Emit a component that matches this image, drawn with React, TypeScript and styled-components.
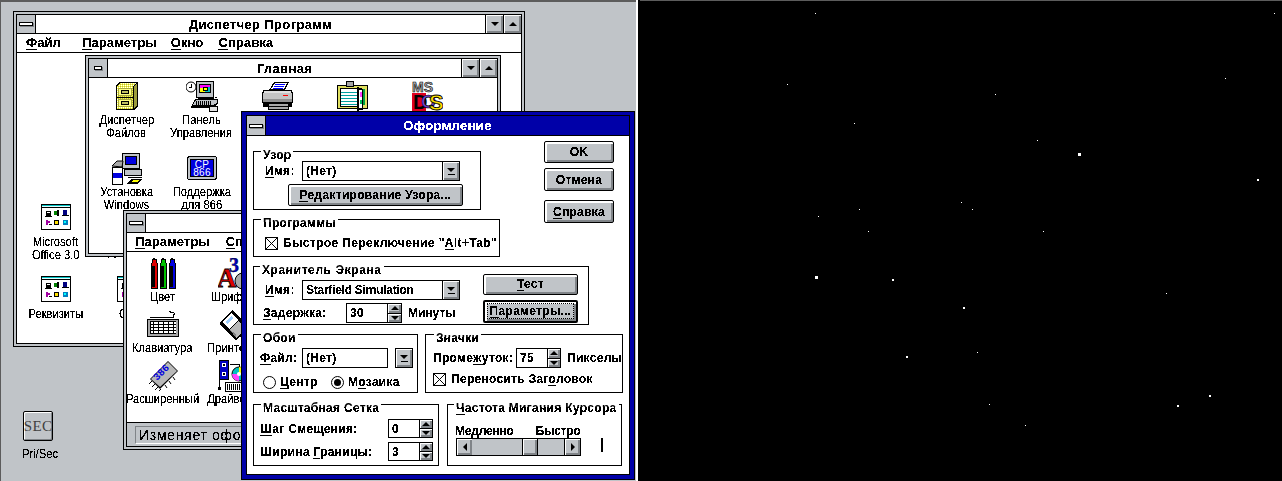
import React from 'react';
import styled, { createGlobalStyle } from 'styled-components';

const FACE = '#c0c4c8';
const SHADE = '#808488';
const NAVY = '#0000a8';

const GlobalStyle = createGlobalStyle`
  html, body { margin: 0; padding: 0; background: #000; }
  #root { width: 1282px; height: 481px; overflow: hidden; }
`;

/* ---------- screen ---------- */

const Screen = styled.div`
  display: flex;
  width: 1282px;
  height: 481px;
`;

const Desktop = styled.div`
  position: relative;
  width: 636px;
  height: 481px;
  flex: none;
  overflow: hidden;
  background: ${FACE};
  border-top: 2px solid #5c5c5c;
  border-left: 1px solid #5c5c5c;
  box-sizing: border-box;
`;

const Divider = styled.div`
  width: 2px;
  flex: none;
  background: #fff;
`;

const Sky = styled.div`
  position: relative;
  flex: 1;
  background: #000;
  border-left: 2px solid #000;
  box-shadow: inset 0 1px 0 #5c5c5c;
`;

const Star = styled.i.attrs<{ $x: number; $y: number; $s: number }>((p) => ({
  style: { left: p.$x - 640, top: p.$y, width: p.$s, height: p.$s },
}))<{ $x: number; $y: number; $s: number }>`
  position: absolute;
  background: #fff;
`;

const STARS: [number, number, number][] = [
  [815, 13, 1], [1274, 13, 1], [1225, 78, 1], [787, 84, 1], [995, 94, 1],
  [854, 123, 1], [1037, 140, 1], [1078, 153, 3], [1257, 179, 2], [961, 202, 1],
  [972, 209, 1], [859, 209, 1], [818, 216, 1], [868, 231, 1], [1043, 231, 1],
  [815, 276, 3], [892, 279, 2], [963, 307, 2], [1166, 293, 1], [906, 356, 2],
  [977, 352, 1], [989, 404, 1], [1025, 425, 1], [1177, 405, 2], [1209, 395, 2],
];

/* ---------- text ---------- */

const Bold = styled.span<{ $track?: number }>`
  font-family: 'Liberation Sans', Arial, sans-serif;
  font-weight: 700;
  font-size: 12px;
  line-height: 14px;
  letter-spacing: ${(p) => p.$track ?? 0.3}px;
  color: #000;
  white-space: nowrap;
  filter: url(#bitmap);
`;

const Thin = styled.span`
  display: block;
  font-family: 'Liberation Sans', Arial, sans-serif;
  font-weight: 400;
  font-size: 13px;
  line-height: 12.5px;
  color: #000;
  white-space: nowrap;
  text-align: center;
  transform: scaleX(0.86);
  filter: url(#bitmap);
`;

const U = styled.u`
  text-decoration: underline;
  text-decoration-thickness: 1px;
  text-underline-offset: 2px;
`;

/* ---------- windows ---------- */

const Win = styled.div<{ $x: number; $y: number; $w: number; $h: number; $z: number }>`
  position: absolute;
  left: ${(p) => p.$x - 1}px;
  top: ${(p) => p.$y - 2}px;
  width: ${(p) => p.$w}px;
  height: ${(p) => p.$h}px;
  z-index: ${(p) => p.$z};
  box-sizing: border-box;
  border: 1px solid #000;
  padding: 2px;
  background: ${FACE};
`;

const WinInner = styled.div`
  position: relative;
  display: flex;
  flex-direction: column;
  height: 100%;
  box-sizing: border-box;
  border: 1px solid #000;
  background: #fff;
`;

const TitleBar = styled.div`
  display: flex;
  height: 18px;
  flex: none;
  border-bottom: 1px solid #000;
  background: #fff;
`;

const SysBox = styled.div`
  display: flex;
  align-items: center;
  justify-content: center;
  width: 18px;
  flex: none;
  background: ${FACE};
  border-right: 1px solid #000;
`;

const SysDash = styled.div<{ $small?: boolean }>`
  width: ${(p) => (p.$small ? 6 : 12)}px;
  height: 2px;
  background: #fff;
  border: 1px solid #000;
  box-shadow: 1px 1px 0 ${SHADE};
`;

const Caption = styled(Bold)`
  flex: 1;
  text-align: center;
  font-size: 13px;
  line-height: 20px;
  letter-spacing: 0.35px;
`;

const CtlBtn = styled.div`
  display: flex;
  align-items: center;
  justify-content: center;
  width: 18px;
  flex: none;
  box-sizing: border-box;
  background: ${FACE};
  border-left: 1px solid #000;
  box-shadow: inset 1px 1px 0 #fff, inset -2px -2px 0 ${SHADE};
`;

const Tri = styled.div<{ $dir: 'up' | 'down' | 'left' | 'right'; $size?: number }>`
  width: 0;
  height: 0;
  ${({ $dir, $size = 4 }) => {
    const s = `${$size}px solid transparent`;
    const b = `${$size}px solid #000`;
    if ($dir === 'up') return `border-left:${s};border-right:${s};border-bottom:${b};`;
    if ($dir === 'down') return `border-left:${s};border-right:${s};border-top:${b};`;
    if ($dir === 'left') return `border-top:${s};border-bottom:${s};border-right:${b};`;
    return `border-top:${s};border-bottom:${s};border-left:${b};`;
  }}
`;

const MenuBar = styled.div<{ $pad: number; $gap: number }>`
  display: flex;
  align-items: center;
  gap: ${(p) => p.$gap}px;
  height: 18px;
  flex: none;
  padding-left: ${(p) => p.$pad}px;
  border-bottom: 1px solid #000;
  background: #fff;
`;

const MenuItem = styled(Bold)<{ $after?: number }>`
  font-size: 13px;
  letter-spacing: 0.1px;
  margin-right: ${(p) => p.$after ?? 0}px;
`;

const PmClient = styled.div`
  position: relative;
  flex: 1;
`;

const MainGrid = styled.div`
  display: grid;
  grid-template-columns: repeat(5, 75px);
  grid-auto-rows: 72px;
  flex: 1;
  padding-top: 3px;
  overflow: hidden;
`;

const PanelGrid = styled.div`
  display: grid;
  grid-template-columns: repeat(2, 71px);
  grid-auto-rows: 51px;
  flex: 1;
  padding-top: 6px;
  overflow: hidden;
`;

const Item = styled.div`
  display: flex;
  flex-direction: column;
  align-items: center;
  min-width: 0;

  svg {
    margin-bottom: 1px;
  }
`;

const Free = styled(Item)<{ $x: number; $y: number }>`
  position: absolute;
  left: ${(p) => p.$x}px;
  top: ${(p) => p.$y}px;
  width: 75px;

  svg {
    margin-bottom: 3px;
  }
`;

const PeekLabel = styled(Thin)<{ $x: number; $y: number }>`
  position: absolute;
  left: ${(p) => p.$x}px;
  top: ${(p) => p.$y}px;
  transform-origin: left center;
`;

const StatusBar = styled.div`
  display: flex;
  align-items: center;
  height: 23px;
  flex: none;
  padding-left: 8px;
  background: ${FACE};
  border-top: 1px solid #000;
`;

const StatusField = styled.div`
  flex: 1;
  height: 16px;
  padding-left: 3px;
  display: flex;
  align-items: center;
  border-top: 1px solid ${SHADE};
  border-left: 1px solid ${SHADE};
  border-bottom: 1px solid #fff;
`;

const StatusText = styled(Thin)`
  font-size: 14px;
  line-height: 16px;
  letter-spacing: 0.7px;
  transform: none;
  margin-top: 1px;
`;

/* ---------- dialog ---------- */

const Dialog = styled.div`
  position: absolute;
  left: 240px;
  top: 109px;
  width: 394px;
  height: 369px;
  z-index: 5;
  box-sizing: border-box;
  border: 1px solid #000;
  padding: 3px 4px 4px;
  background: ${NAVY};
`;

const DialogInner = styled.div`
  display: flex;
  flex-direction: column;
  height: 100%;
  box-sizing: border-box;
  border: 1px solid #000;
  background: #fff;
`;

const DialogTitle = styled.div`
  display: flex;
  height: 19px;
  flex: none;
  background: ${NAVY};
  border-bottom: 1px solid #000;
`;

const DialogCaption = styled(Bold)`
  flex: 1;
  text-align: center;
  color: #fff;
  font-size: 13px;
  line-height: 19px;
  letter-spacing: 0.35px;
`;

const Client = styled.div`
  display: flex;
  flex-direction: column;
  flex: 1;
  padding: 5px 6px 6px;
`;

const Row = styled.div<{ $gap?: number; $top?: number }>`
  display: flex;
  gap: ${(p) => p.$gap ?? 0}px;
  margin-top: ${(p) => p.$top ?? 0}px;
  flex: none;
`;

const LeftStack = styled.div`
  display: flex;
  flex-direction: column;
  gap: 9px;
  padding-top: 10px;
`;

const ButtonStack = styled.div`
  display: flex;
  flex-direction: column;
  margin-left: 44px;
  width: 70px;
`;

const Group = styled.div<{ $w: number; $h: number }>`
  position: relative;
  width: ${(p) => p.$w}px;
  height: ${(p) => p.$h}px;
  box-sizing: border-box;
  border: 1px solid #000;
`;

const Legend = styled(Bold)<{ $x: number }>`
  position: absolute;
  left: ${(p) => p.$x}px;
  top: -4px;
  padding: 0 2px;
  background: linear-gradient(#fff, #fff) top / 100% 6px no-repeat;
`;

const GroupBody = styled.div<{ $pad: string; $gap?: number }>`
  display: flex;
  flex-direction: column;
  gap: ${(p) => p.$gap ?? 0}px;
  padding: ${(p) => p.$pad};
`;

const Line = styled.div<{ $gap?: number; $h?: number; $in?: number }>`
  display: flex;
  align-items: center;
  gap: ${(p) => p.$gap ?? 0}px;
  height: ${(p) => (p.$h ? `${p.$h}px` : 'auto')};
  padding-left: ${(p) => p.$in ?? 0}px;
`;

const Label = styled(Bold)<{ $w?: number; $in?: number }>`
  display: block;
  box-sizing: border-box;
  width: ${(p) => (p.$w ? `${p.$w}px` : 'auto')};
  padding-left: ${(p) => p.$in ?? 0}px;
  flex: none;
`;

const Btn = styled.div<{ $w?: number; $h: number; $top?: number; $left?: number; $default?: boolean }>`
  display: flex;
  align-items: center;
  justify-content: center;
  width: ${(p) => (p.$w ? `${p.$w}px` : '100%')};
  height: ${(p) => p.$h}px;
  margin-top: ${(p) => p.$top ?? 0}px;
  margin-left: ${(p) => p.$left ?? 0}px;
  flex: none;
  box-sizing: border-box;
  background: ${FACE};
  border: ${(p) => (p.$default ? 2 : 1)}px solid #000;
  border-radius: 2px;
  box-shadow: inset 1px 1px 0 #fff, inset 2px 2px 0 #fff, inset -1px -1px 0 ${SHADE}, inset -2px -2px 0 ${SHADE};
`;

const Focus = styled.div`
  padding: 0 2px;
  outline: 1px dotted #000;
  outline-offset: 0;
  display: flex;
`;

const Field = styled.div<{ $w?: number; $h: number; $line?: boolean }>`
  display: flex;
  align-items: center;
  width: ${(p) => (p.$w ? `${p.$w}px` : 'auto')};
  flex: ${(p) => (p.$w ? 'none' : 1)};
  height: ${(p) => p.$h}px;
  box-sizing: border-box;
  padding-left: 3px;
  border: 1px solid #000;
  background: #fff;
`;

const Combo = styled.div<{ $w: number }>`
  display: flex;
  width: ${(p) => p.$w}px;
  height: 20px;
  flex: none;
`;

const Arrow = styled.div<{ $w: number; $h?: number; $left?: number }>`
  display: flex;
  flex-direction: column;
  align-items: center;
  justify-content: center;
  gap: 1px;
  width: ${(p) => p.$w}px;
  height: ${(p) => (p.$h ? `${p.$h}px` : 'auto')};
  flex: none;
  box-sizing: border-box;
  background: ${FACE};
  border: 1px solid #000;
  margin-left: ${(p) => p.$left ?? 0}px;
  box-shadow: inset 1px 1px 0 #fff, inset -2px -2px 0 ${SHADE};
`;

const DownBar = styled.div`
  width: 7px;
  height: 1px;
  background: #000;
  margin-top: 1px;
`;

const Spin = styled.div<{ $w: number; $h: number }>`
  display: flex;
  flex-direction: column;
  width: ${(p) => p.$w}px;
  height: ${(p) => p.$h}px;
  margin-left: -1px;
  flex: none;
`;

const SpinPart = styled(Arrow)<{ $last?: boolean }>`
  flex: 1;
  width: 100%;
  margin-top: ${(p) => (p.$last ? -1 : 0)}px;
`;

const CheckSvg = styled.svg`
  flex: none;
  shape-rendering: crispEdges;
`;

const RadioSvg = styled.svg`
  flex: none;
`;

const Scroll = styled.div`
  display: flex;
  width: 125px;
  height: 18px;
  flex: none;
  box-sizing: border-box;
`;

const Track = styled.div`
  flex: 1;
  display: flex;
  margin: 0 -1px;
  background: ${FACE};
  border-top: 1px solid #000;
  border-bottom: 1px solid #000;
`;

const Thumb = styled.div<{ $pos: number }>`
  width: 16px;
  margin-left: ${(p) => p.$pos}px;
  box-sizing: border-box;
  border: solid #000;
  border-width: 0 1px;
  box-shadow: inset 1px 1px 0 #fff, inset -2px -2px 0 ${SHADE};
`;

const Caret = styled.div`
  width: 2px;
  height: 14px;
  background: #000;
  margin: 0 0 4px 20px;
`;

/* ---------- icons ---------- */

const IconSvg = styled.svg`
  display: block;
  flex: none;
  shape-rendering: crispEdges;
`;

const Px: React.FC<{ d: [number, number, number, number, string][] }> = ({ d }) => (
  <>
    {d.map(([x, y, w, h, f], i) => (
      <rect key={i} x={x} y={y} width={w} height={h} fill={f} />
    ))}
  </>
);

const Icon: React.FC<{ children: React.ReactNode }> = ({ children }) => (
  <IconSvg width={32} height={32} viewBox="0 0 32 32">
    {children}
  </IconSvg>
);

const CabinetIcon = () => (
  <Icon>
    <polygon points="5,4 9,1 27,1 27,25 23,29 5,29" fill="#000" />
    <polygon points="6,5 10,2 26,2 22,5" fill="url(#yellowDither)" />
    <rect x={6} y={5} width={16} height={23} fill="url(#yellowDither)" />
    <polygon points="23,5 26,2 26,24 23,27" fill="#9c9c3c" />
    <Px d={[
      [5, 16, 18, 1, '#000'], [7, 7, 14, 8, '#a8a840'], [8, 8, 12, 6, '#ffff80'],
      [10, 9, 8, 4, '#000'], [11, 10, 6, 2, '#c0c060'],
      [7, 18, 14, 8, '#a8a840'], [8, 19, 12, 6, '#ffff80'], [10, 20, 8, 4, '#000'], [11, 21, 6, 2, '#c0c060'],
    ]} />
  </Icon>
);

const ControlIcon = () => (
  <Icon>
    <circle cx={5} cy={6} r={5} fill="#fff" stroke="#000" shapeRendering="auto" />
    <Px d={[[5, 3, 1, 4, '#000'], [3, 6, 3, 1, '#000']]} />
    <Px d={[
      [10, 0, 18, 17, '#000'], [11, 1, 16, 15, FACE], [13, 3, 12, 9, '#000'], [14, 4, 10, 3, '#ff00ff'],
      [14, 7, 5, 4, '#ffff00'], [19, 6, 5, 5, '#00c0c0'], [17, 6, 5, 4, '#000'], [18, 7, 3, 2, '#ffff00'],
      [12, 16, 16, 2, '#000'], [29, 16, 2, 1, '#000'],
    ]} />
    <polygon points="5,26 9,18 32,18 32,23 28,26" fill="#000" />
    <polygon points="7,24 10,19 31,19 31,22 27,24" fill={FACE} />
    <Px d={[
      [10, 20, 1, 4, '#000'], [12, 20, 1, 4, '#000'], [14, 20, 1, 4, '#000'], [16, 20, 1, 4, '#000'],
      [18, 20, 1, 4, '#000'], [20, 20, 1, 4, '#000'], [22, 20, 1, 4, '#000'], [24, 20, 1, 4, '#000'],
      [5, 26, 24, 1, '#000'], [23, 25, 9, 6, '#000'], [24, 26, 7, 4, '#e0e0e0'],
    ]} />
  </Icon>
);

const PrinterIcon = () => (
  <Icon>
    <polygon points="8,9 13,1 28,1 24,9" fill="#000" />
    <polygon points="10,8 14,2 26,2 23,8" fill="#fff" />
    <Px d={[[14, 3, 10, 1, '#0000ff'], [13, 5, 10, 1, '#0000ff'], [12, 7, 10, 1, '#0000ff']]} />
    <Px d={[
      [2, 9, 29, 17, '#000'], [1, 11, 31, 11, '#000'], [3, 10, 27, 6, '#e0e0e0'], [2, 12, 29, 9, '#c4c4c4'],
      [2, 18, 29, 3, '#909090'], [22, 14, 5, 1, '#ff0000'],
      [7, 22, 21, 7, '#000'], [8, 23, 19, 5, '#a8a8a8'], [8, 25, 19, 1, '#000'],
    ]} />
  </Icon>
);

const BinderIcon = () => (
  <Icon>
    <Px d={[
      [1, 4, 31, 24, '#000'], [2, 5, 29, 22, '#e0e060'], [4, 7, 22, 19, '#000'], [5, 8, 16, 17, '#fff'],
      [5, 11, 16, 1, '#00a0a0'], [5, 14, 16, 1, '#00a0a0'], [5, 17, 16, 1, '#00a0a0'], [5, 20, 16, 1, '#00a0a0'],
      [5, 23, 16, 1, '#00a0a0'], [10, 0, 8, 6, '#000'], [11, 1, 6, 4, '#a8a8a8'],
      [26, 8, 3, 16, '#00a040'], [21, 6, 2, 26, '#000'], [23, 8, 4, 21, '#000'], [23, 9, 3, 18, '#fff'],
      [24, 11, 2, 5, '#ff40ff'], [24, 19, 2, 4, '#00c060'],
    ]} />
  </Icon>
);

const LogoText = styled.text`
  font-family: 'Liberation Sans', Arial, sans-serif;
  font-weight: 700;
  shape-rendering: auto;
`;

const MsDosIcon = () => (
  <Icon>
    <LogoText x={1} y={11} fontSize={14} fill="#b0b0b0" stroke="#000" strokeWidth={0.6}>MS</LogoText>
    <Px d={[[1, 12, 14, 19, '#e00020']]} />
    <LogoText x={2} y={28} fontSize={20} fill="#000">D</LogoText>
    <LogoText x={10} y={27} fontSize={19} fill="#7040d0" stroke="#000" strokeWidth={0.7}>O</LogoText>
    <LogoText x={18} y={29} fontSize={22} fill="#ffe000" stroke="#000" strokeWidth={0.9}>S</LogoText>
  </Icon>
);

const SetupIcon = () => (
  <Icon>
    <Px d={[
      [11, 0, 18, 16, '#000'], [12, 1, 16, 14, FACE], [14, 3, 12, 9, '#000'], [15, 4, 10, 7, '#0000e0'],
      [13, 16, 18, 7, '#000'], [14, 17, 16, 5, FACE], [17, 24, 14, 1, '#000'],
      [1, 14, 11, 18, '#000'], [2, 15, 9, 5, '#fff'], [2, 20, 9, 5, '#0000e0'], [2, 25, 9, 6, '#fff'],
    ]} />
    <polygon points="1,13 6,8 12,8 11,14" fill="#a8a8a8" stroke="#000" shapeRendering="auto" />
    <polygon points="16,31 20,26 31,26 27,31" fill="#000" />
    <polygon points="20,29 22,27 28,27 26,29" fill="#ffff00" />
  </Icon>
);

const ScreenLabel = styled.text`
  font-family: 'Liberation Sans', sans-serif;
  font-size: 10px;
  font-weight: 400;
  letter-spacing: 0.3px;
`;

const Cp866Icon = () => (
  <Icon>
    <rect x={1} y={3} width={30} height={24} rx={3} fill="#000" />
    <rect x={2} y={4} width={28} height={22} rx={2} fill={FACE} />
    <rect x={4} y={6} width={24} height={18} fill="#000" />
    <rect x={5} y={7} width={22} height={16} fill="#0000e0" />
    <ScreenLabel x={16} y={15} textAnchor="middle" fill="#fff">CP</ScreenLabel>
    <ScreenLabel x={16} y={23} textAnchor="middle" fill="#fff">866</ScreenLabel>
  </Icon>
);

const GroupIcon = () => (
  <Icon>
    <Px d={[
      [1, 3, 30, 26, '#000'], [2, 4, 28, 24, '#fff'], [2, 4, 28, 1, '#00c0c0'], [2, 5, 28, 1, '#e0ffff'],
      [2, 6, 28, 1, '#000'],
      [6, 10, 5, 5, '#000'], [7, 11, 3, 1, '#fff'], [5, 15, 7, 1, '#000'],
      [14, 10, 4, 4, '#008000'], [17, 9, 2, 6, '#000'],
      [23, 9, 4, 5, '#000080'], [22, 14, 7, 1, '#000'],
      [6, 19, 2, 5, '#a000a0'], [9, 23, 3, 1, '#000'], [8, 20, 2, 2, '#a000a0'],
      [14, 19, 5, 5, '#000'], [15, 20, 3, 3, '#ffe000'],
      [23, 19, 5, 5, '#0080c0'], [24, 20, 2, 2, '#00ffff'],
    ]} />
  </Icon>
);

const crayon = (x: number, c: string): [number, number, number, number, string][] => [
  [x + 1, 0, 2, 1, '#000'], [x, 1, 5, 4, '#000'], [x + 1, 2, 3, 3, c], [x - 1, 5, 7, 26, '#000'],
  [x, 5, 5, 3, c], [x + 3, 8, 2, 21, c], [x, 29, 5, 1, c],
];

const CrayonsIcon = () => (
  <Icon>
    <Px d={[...crayon(5, '#e00000'), ...crayon(14, '#00c000'), ...crayon(23, '#0000e0')]} />
  </Icon>
);

const FontSample = styled.text`
  font-family: 'Liberation Serif', serif;
  font-weight: 700;
`;

const FontsIcon = () => (
  <Icon>
    <circle cx={25} cy={23} r={8} fill="#a8a8a8" stroke="#000" shapeRendering="auto" />
    <FontSample x={11} y={14} fontSize={20} fill="#0000c0" stroke="#000" strokeWidth={0.4}>3</FontSample>
    <FontSample x={-1} y={29} fontSize={27} fill="#e00000" stroke="#000" strokeWidth={0.8}>A</FontSample>
  </Icon>
);

const KeyboardIcon = () => {
  const keys: [number, number, number, number, string][] = [];
  for (let r = 0; r < 4; r++) {
    for (let c = 0; c < 10; c++) keys.push([4 + c * 2.5, 13 + r * 3, 2, 2, '#fff']);
  }
  return (
    <Icon>
      <Px d={[
        [3, 8, 23, 1, '#000'], [26, 5, 1, 4, '#000'], [23, 3, 4, 1, '#000'], [27, 4, 1, 2, '#000'], [22, 2, 2, 1, '#000'],
        [0, 10, 32, 18, '#000'], [1, 11, 30, 16, '#a8a8a8'], [3, 12, 26, 13, '#000'],
      ]} />
      <Px d={keys} />
    </Icon>
  );
};

const SidePrinterIcon = () => (
  <Icon>
    <polygon points="2,13 14,1 30,17 30,22 18,31 2,16" fill="#000" />
    <polygon points="4,13 13,4 20,11 11,20" fill="#fff" />
    <polygon points="7,13 13,7 15,9 9,15" fill="#a0d0ff" />
    <polygon points="12,21 20,12 30,19 18,29" fill="#b8b8b8" />
    <polygon points="12,21 18,29 18,25" fill="#808080" />
  </Icon>
);

const ChipText = styled.text`
  font-family: 'Liberation Mono', monospace;
  font-size: 10px;
  font-weight: 700;
`;

const ChipIcon = () => (
  <Icon>
    <g shapeRendering="auto">
      <polygon points="21,1 31,11 13,29 3,19" fill="#000" />
      <polygon points="21,2 30,11 13,27 4,19" fill="#b8b8b8" />
      <g stroke="#000" strokeWidth={1}>
        <path d="M5,21 l-3,3 M8,24 l-3,3 M11,27 l-3,3 M14,29 l-2,2 M18,25 l2,3 M22,21 l2,3 M26,17 l2,3" />
      </g>
      <ChipText x={0} y={0} fill="#0000e0" transform="translate(10,21) rotate(-45)">386</ChipText>
    </g>
  </Icon>
);

const DriversIcon = () => {
  const keys: [number, number, number, number, string][] = [];
  for (let i = 0; i < 10; i++) keys.push([9 + i * 2, 24, 1, 6, '#000']);
  return (
    <Icon>
      <Px d={[
        [1, 0, 10, 20, '#000'], [2, 1, 8, 18, '#0000c0'], [4, 3, 4, 4, '#fff'], [5, 4, 2, 2, '#000'],
        [4, 12, 4, 4, '#fff'], [5, 13, 2, 2, '#000'], [12, 4, 10, 1, '#000'], [21, 4, 1, 4, '#000'],
        [1, 20, 1, 8, '#000'], [0, 27, 3, 3, '#000'],
        [7, 22, 25, 10, '#000'], [8, 23, 23, 8, '#fff'],
      ]} />
      <Px d={keys} />
      <circle cx={21} cy={14} r={7} fill="#00c0c0" stroke="#000" shapeRendering="auto" />
      <path d="M21,14 L21,7 A7,7 0 0 1 28,14 Z" fill="#ffff00" shapeRendering="auto" />
      <path d="M21,14 L14,14 A7,7 0 0 0 21,21 Z" fill="#ff40ff" shapeRendering="auto" />
      <circle cx={21} cy={14} r={2} fill="#fff" shapeRendering="auto" />
    </Icon>
  );
};

const SecBadge = styled.div`
  display: flex;
  align-items: center;
  justify-content: center;
  width: 30px;
  height: 30px;
  margin: 0 3px 7px 0;
  box-sizing: border-box;
  border: 1px solid #000;
  border-radius: 2px;
  background: ${FACE};
  box-shadow: inset 1px 1px 0 #fff, inset -1px -1px 0 ${SHADE};
`;

const SecText = styled.span`
  font-family: 'Liberation Serif', serif;
  font-size: 15px;
  letter-spacing: 0.3px;
  color: #404040;
`;

/* ---------- controls built from the parts ---------- */

const CheckBox = () => (
  <CheckSvg width={13} height={13} viewBox="0 0 13 13">
    <rect x={0.5} y={0.5} width={12} height={12} fill="#fff" stroke="#000" />
    <path d="M1,1 L12,12 M12,1 L1,12" stroke="#000" shapeRendering="auto" />
  </CheckSvg>
);

const Radio: React.FC<{ on?: boolean }> = ({ on }) => (
  <RadioSvg width={13} height={13} viewBox="0 0 13 13">
    <circle cx={6.5} cy={6.5} r={6} fill="#fff" stroke="#000" />
    {on && <circle cx={6.5} cy={6.5} r={3.5} fill="#000" />}
  </RadioSvg>
);

const Drop: React.FC<{ left?: number }> = ({ left }) => (
  <Arrow $w={18} $left={left} $h={20}>
    <Tri $dir="down" />
    <DownBar />
  </Arrow>
);

const Spinner: React.FC<{ w: number; h: number }> = ({ w, h }) => (
  <Spin $w={w} $h={h}>
    <SpinPart $w={w}><Tri $dir="up" /></SpinPart>
    <SpinPart $w={w} $last><Tri $dir="down" /></SpinPart>
  </Spin>
);

const Sys: React.FC<{ small?: boolean }> = ({ small }) => (
  <SysBox><SysDash $small={small} /></SysBox>
);

const Controls = () => (
  <>
    <CtlBtn><Tri $dir="down" /></CtlBtn>
    <CtlBtn><Tri $dir="up" /></CtlBtn>
  </>
);

const Named: React.FC<{ icon: React.ReactNode; lines?: string[] }> = ({ icon, lines = [] }) => (
  <Item>
    {icon}
    {lines.map((l) => <Thin key={l}>{l}</Thin>)}
  </Item>
);

export default function App() {
  return (
    <>
      <GlobalStyle />
      <svg width={0} height={0} style={{ position: 'absolute' }}>
        <defs>
          <filter id="bitmap" x="-5%" y="-20%" width="110%" height="140%" colorInterpolationFilters="sRGB">
            <feComponentTransfer>
              <feFuncA type="discrete" tableValues="0 0 1 1 1" />
            </feComponentTransfer>
          </filter>
          <pattern id="yellowDither" width={2} height={2} patternUnits="userSpaceOnUse">
            <rect width={2} height={2} fill="#ffff40" />
            <rect width={1} height={1} fill="#fff" />
            <rect x={1} y={1} width={1} height={1} fill="#b0b040" />
          </pattern>
        </defs>
      </svg>
      <Screen>
        <Desktop>
          <Free $x={1} $y={409}>
            <SecBadge><SecText>SEC</SecText></SecBadge>
            <Thin>Pri/Sec</Thin>
          </Free>

          <Win $x={13} $y={11} $w={512} $h={336} $z={1}>
            <WinInner>
              <TitleBar>
                <Sys />
                <Caption>Диспетчер Программ</Caption>
                <Controls />
              </TitleBar>
              <MenuBar $pad={9} $gap={14}>
                <MenuItem $after={7}><U>Ф</U>айл</MenuItem>
                <MenuItem><U>П</U>араметры</MenuItem>
                <MenuItem $after={1}><U>О</U>кно</MenuItem>
                <MenuItem><U>С</U>правка</MenuItem>
              </MenuBar>
              <PmClient>
                <Free $x={1} $y={148}>
                  <GroupIcon />
                  <Thin>Microsoft</Thin>
                  <Thin>Office 3.0</Thin>
                </Free>
                <Free $x={1} $y={220}>
                  <GroupIcon />
                  <Thin>Реквизиты</Thin>
                </Free>
                <Free $x={77} $y={220}>
                  <GroupIcon />
                  <Thin>Сеть</Thin>
                </Free>
                <PeekLabel $x={83} $y={192}>Applications</PeekLabel>
              </PmClient>
            </WinInner>
          </Win>

          <Win $x={85} $y={55} $w={416} $h={202} $z={2}>
            <WinInner>
              <TitleBar>
                <Sys small />
                <Caption>Главная</Caption>
                <Controls />
              </TitleBar>
              <MainGrid>
                <Named icon={<CabinetIcon />} lines={['Диспетчер', 'Файлов']} />
                <Named icon={<ControlIcon />} lines={['Панель', 'Управления']} />
                <Named icon={<PrinterIcon />} />
                <Named icon={<BinderIcon />} />
                <Named icon={<MsDosIcon />} />
                <Named icon={<SetupIcon />} lines={['Установка', 'Windows']} />
                <Named icon={<Cp866Icon />} lines={['Поддержка', 'для 866']} />
              </MainGrid>
            </WinInner>
          </Win>

          <Win $x={123} $y={210} $w={260} $h={240} $z={3}>
            <WinInner>
              <TitleBar>
                <Sys />
                <Caption />
              </TitleBar>
              <MenuBar $pad={8} $gap={16}>
                <MenuItem><U>П</U>араметры</MenuItem>
                <MenuItem><U>С</U>правка</MenuItem>
              </MenuBar>
              <PanelGrid>
                <Named icon={<CrayonsIcon />} lines={['Цвет']} />
                <Named icon={<FontsIcon />} lines={['Шрифты']} />
                <Named icon={<KeyboardIcon />} lines={['Клавиатура']} />
                <Named icon={<SidePrinterIcon />} lines={['Принтеры']} />
                <Named icon={<ChipIcon />} lines={['Расширенный']} />
                <Named icon={<DriversIcon />} lines={['Драйверы']} />
              </PanelGrid>
              <StatusBar>
                <StatusField><StatusText>Изменяет оформление</StatusText></StatusField>
              </StatusBar>
            </WinInner>
          </Win>

          <Dialog>
            <DialogInner>
              <DialogTitle>
                <Sys />
                <DialogCaption>Оформление</DialogCaption>
              </DialogTitle>
              <Client>
                <Row>
                  <LeftStack>
                    <Group $w={228} $h={59}>
                      <Legend $x={7}>Узор</Legend>
                      <GroupBody $pad="9px 0 0 11px" $gap={3}>
                        <Line $h={20}>
                          <Label $w={37}><U>И</U>мя:</Label>
                          <Combo $w={158}>
                            <Field $h={20}><Bold>(Нет)</Bold></Field>
                            <Drop left={-1} />
                          </Combo>
                        </Line>
                        <Btn $w={175} $h={22} $left={23}>
                          <Bold><U>Р</U>едактирование Узора...</Bold>
                        </Btn>
                      </GroupBody>
                    </Group>
                    <Group $w={247} $h={38}>
                      <Legend $x={7}>Программы</Legend>
                      <GroupBody $pad="16px 0 0 11px">
                        <Line $gap={5}>
                          <CheckBox />
                          <Bold $track={0.4}>Быстрое Переключение "<U>A</U>lt+Tab"</Bold>
                        </Line>
                      </GroupBody>
                    </Group>
                  </LeftStack>
                  <ButtonStack>
                    <Btn $h={22}><Bold>OK</Bold></Btn>
                    <Btn $h={23} $top={5}><Bold>Отмена</Bold></Btn>
                    <Btn $h={23} $top={9}><Bold><U>С</U>правка</Bold></Btn>
                  </ButtonStack>
                </Row>

                <Row $top={9}>
                  <Group $w={336} $h={59}>
                    <Legend $x={6} $track={0.6}>Хранитель Экрана</Legend>
                    <Line>
                      <GroupBody $pad="13px 0 0 9px" $gap={3}>
                        <Line $h={20}>
                          <Label $w={39} $in={2}><U>И</U>мя:</Label>
                          <Combo $w={158}>
                            <Field $h={20}><Bold $track={-0.25}>Starfield Simulation</Bold></Field>
                            <Drop left={-1} />
                          </Combo>
                        </Line>
                        <Line $h={20}>
                          <Label $w={83}><U>З</U>адержка:</Label>
                          <Field $w={42} $h={20}><Bold>30</Bold></Field>
                          <Spinner w={15} h={20} />
                          <Label $in={6} $track={0}>Минуты</Label>
                        </Line>
                      </GroupBody>
                      <GroupBody $pad="6px 0 0 23px" $gap={5}>
                        <Btn $w={95} $h={21}><Bold><U>Т</U>ест</Bold></Btn>
                        <Btn $w={95} $h={23} $default>
                          <Focus><Bold><U>П</U>араметры...</Bold></Focus>
                        </Btn>
                      </GroupBody>
                    </Line>
                  </Group>
                </Row>

                <Row $top={9} $gap={7}>
                  <Group $w={165} $h={59}>
                    <Legend $x={7}>Обои</Legend>
                    <GroupBody $pad="13px 0 0 6px" $gap={7}>
                      <Line $h={20}>
                        <Label $w={42}><U>Ф</U>айл:</Label>
                        <Field $w={86} $h={20}><Bold>(Нет)</Bold></Field>
                        <Drop left={7} />
                      </Line>
                      <Line $gap={4} $in={3}>
                        <Radio />
                        <Label $w={47}><U>Ц</U>ентр</Label>
                        <Radio on />
                        <Bold>М<U>о</U>заика</Bold>
                      </Line>
                    </GroupBody>
                  </Group>
                  <Group $w={198} $h={59}>
                    <Legend $x={8}>Значки</Legend>
                    <GroupBody $pad="13px 0 0 7px" $gap={4}>
                      <Line $h={20}>
                        <Label $w={83}>Проме<U>ж</U>уток:</Label>
                        <Field $w={32} $h={20}><Bold>75</Bold></Field>
                        <Spinner w={14} h={20} />
                        <Label $in={6}>Пикселы</Label>
                      </Line>
                      <Line $gap={5}>
                        <CheckBox />
                        <Bold>Переносить Заг<U>о</U>ловок</Bold>
                      </Line>
                    </GroupBody>
                  </Group>
                </Row>

                <Row $top={11} $gap={8}>
                  <Group $w={186} $h={62}>
                    <Legend $x={7}>Масштабная Сетка</Legend>
                    <GroupBody $pad="14px 0 0 6px" $gap={4}>
                      <Line $h={19}>
                        <Label $w={128}><U>Ш</U>аг Смещения:</Label>
                        <Field $w={32} $h={19}><Bold>0</Bold></Field>
                        <Spinner w={14} h={19} />
                      </Line>
                      <Line $h={19}>
                        <Label $w={128}>Ширина <U>Г</U>раницы:</Label>
                        <Field $w={32} $h={19}><Bold>3</Bold></Field>
                        <Spinner w={14} h={19} />
                      </Line>
                    </GroupBody>
                  </Group>
                  <Group $w={175} $h={62}>
                    <Legend $x={6}><U>Ч</U>астота Мигания Курсора</Legend>
                    <GroupBody $pad="19px 0 0 7px">
                      <Line $gap={22}>
                        <Bold $track={-0.2}>Медленно</Bold>
                        <Bold $track={-0.2}>Быстро</Bold>
                      </Line>
                      <Line $in={1}>
                        <Scroll>
                          <Arrow $w={17}><Tri $dir="left" /></Arrow>
                          <Track><Thumb $pos={50} /></Track>
                          <Arrow $w={17}><Tri $dir="right" /></Arrow>
                        </Scroll>
                        <Caret />
                      </Line>
                    </GroupBody>
                  </Group>
                </Row>
              </Client>
            </DialogInner>
          </Dialog>
        </Desktop>
        <Divider />
        <Sky>
          {STARS.map(([x, y, s]) => (
            <Star key={`${x}-${y}`} $x={x} $y={y} $s={s} />
          ))}
        </Sky>
      </Screen>
    </>
  );
}
